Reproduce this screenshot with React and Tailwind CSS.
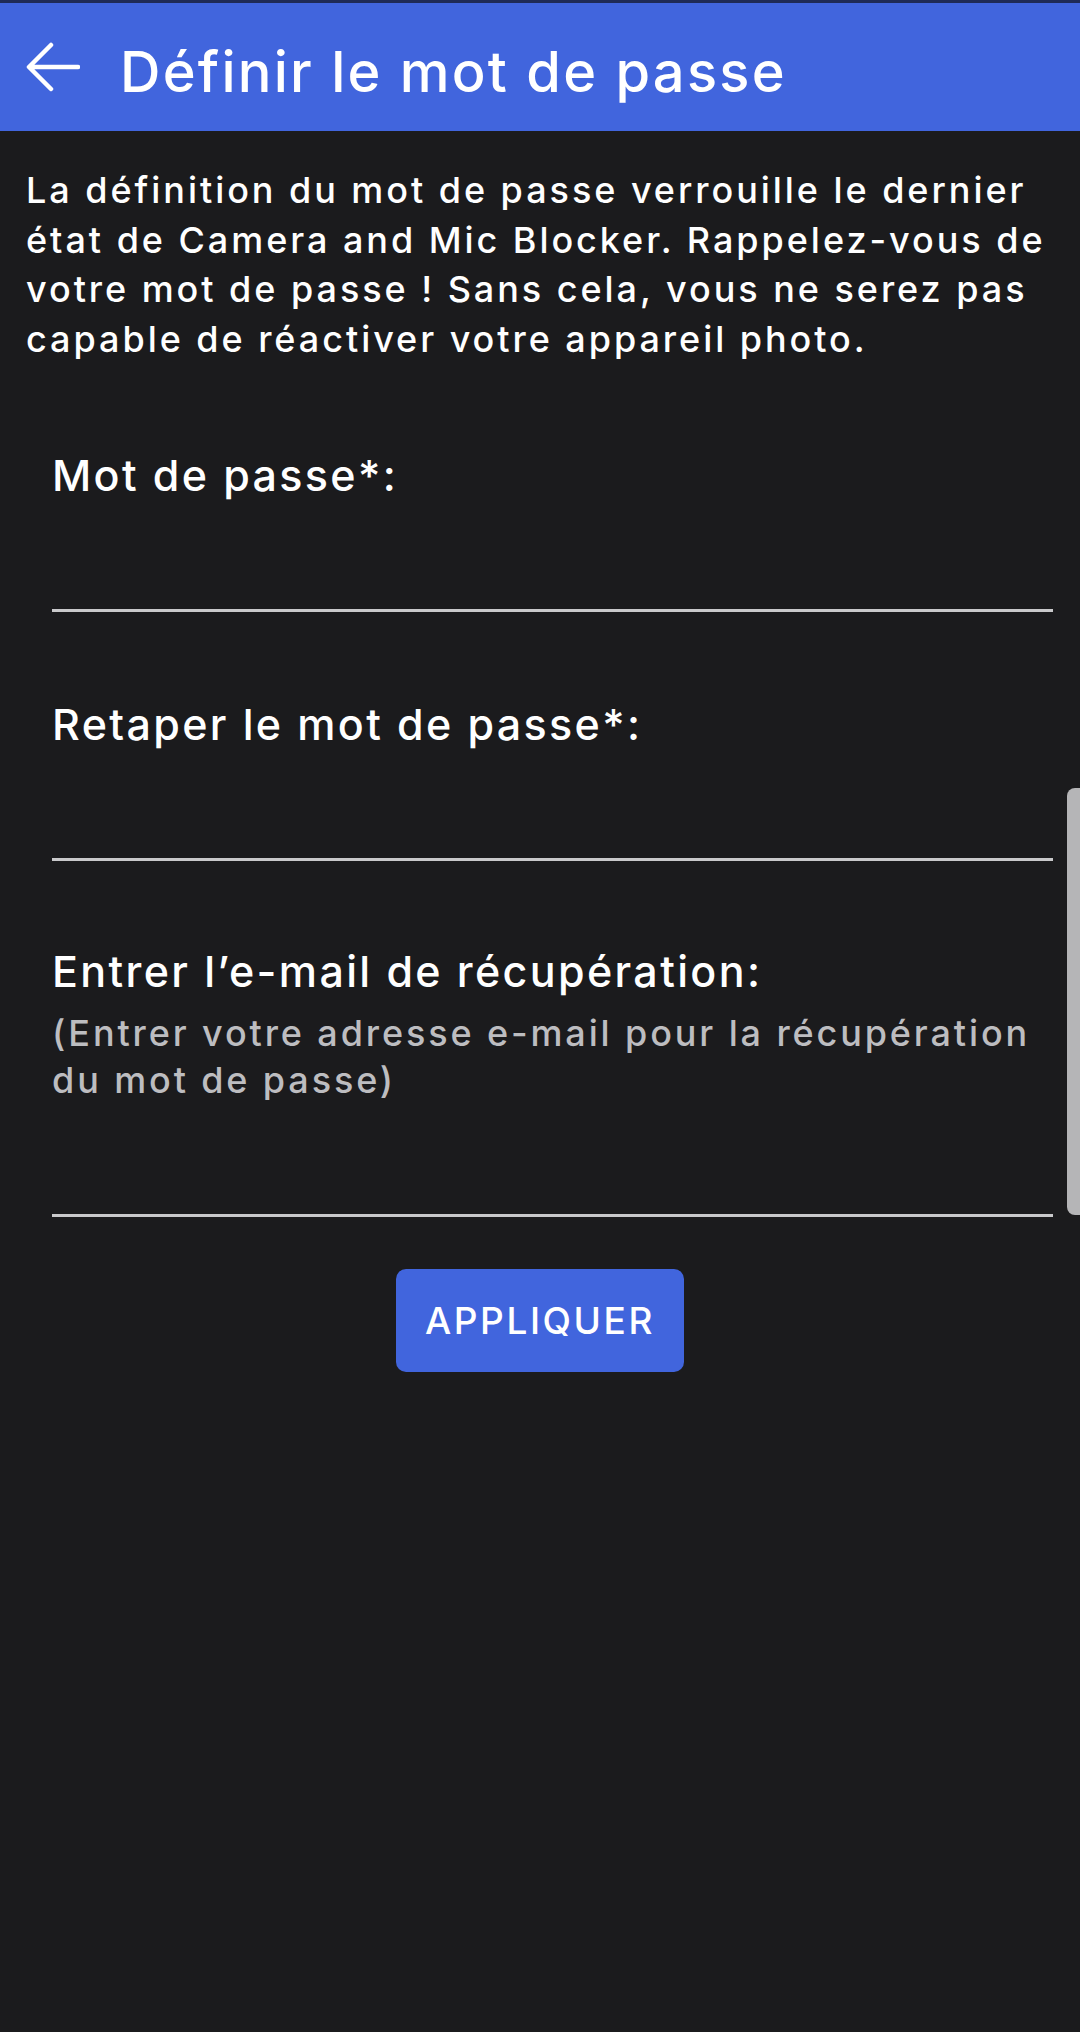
// App.jsx
// "Définir le mot de passe" settings screen (dark theme)

import React, { useState } from 'react';

const font = { fontFamily: 'Inter, "Noto Sans", sans-serif' };

function BackArrow() {
  return (
    <svg width="54" height="50" viewBox="0 0 54 50" fill="none">
      <path
        d="M52 25H4M25 3L3 25l22 22"
        stroke="white"
        strokeWidth="4.5"
        strokeLinecap="round"
        strokeLinejoin="round"
      />
    </svg>
  );
}

function Field({ label, hint, value, onChange, type, className }) {
  return (
    <div className={className}>
      <div className="text-[43px] leading-[48px] font-medium tracking-[0.055em] text-white">{label}</div>
      {hint && (
        <div className="mt-[15px] text-[36px] leading-[47px] font-medium tracking-[0.08em] text-[#bdbdc0]">
          {hint}
        </div>
      )}
      <input
        type={type}
        value={value}
        onChange={(e) => onChange(e.target.value)}
        className="block w-full h-[113px] bg-transparent border-b-[3px] border-[#c9c9cb] outline-none text-white text-[34px]"
      />
    </div>
  );
}

export default function App() {
  const [password, setPassword] = useState('');
  const [retype, setRetype] = useState('');
  const [email, setEmail] = useState('');

  return (
    <div className="relative min-h-[2032px] bg-[#1b1b1d] flex flex-col" style={font}>
      {/* Header */}
      <header className="h-[131px] bg-[#4165dd] border-t-[3px] border-[#1f2b57] flex items-center pl-[26px]">
        <BackArrow />
        <h1 className="ml-[40px] mt-[9px] text-[56px] font-medium tracking-[0.04em] text-white leading-none">
          Définir le mot de passe
        </h1>
      </header>

      {/* Description */}
      <p className="pt-[35px] pl-[26px] pr-[16px] text-[36px] leading-[49.5px] font-medium tracking-[0.082em] text-white">
        La définition du mot de passe verrouille le dernier état de Camera and Mic Blocker.
        Rappelez-vous de votre mot de passe ! Sans cela, vous ne serez pas capable de
        réactiver votre appareil photo.
      </p>

      {/* Form */}
      <div className="pl-[52px] pr-[27px]">
        <Field
          className="mt-[87px]"
          label="Mot de passe*:"
          type="password"
          value={password}
          onChange={setPassword}
        />
        <Field
          className="mt-[88px]"
          label="Retaper le mot de passe*:"
          type="password"
          value={retype}
          onChange={setRetype}
        />
        <Field
          className="mt-[86px]"
          label="Entrer l’e-mail de récupération:"
          hint="(Entrer votre adresse e-mail pour la récupération du mot de passe)"
          type="email"
          value={email}
          onChange={setEmail}
        />
      </div>

      {/* Apply */}
      <div className="flex justify-center mt-[52px]">
        <button className="w-[288px] h-[103px] rounded-[10px] bg-[#4165dd] text-white text-[37px] font-medium tracking-[0.07em]">
          APPLIQUER
        </button>
      </div>

      {/* Scroll indicator */}
      <div className="absolute right-0 top-[788px] w-[13px] h-[427px] bg-[#b5b5b7] rounded-l-[8px]" />
    </div>
  );
}
